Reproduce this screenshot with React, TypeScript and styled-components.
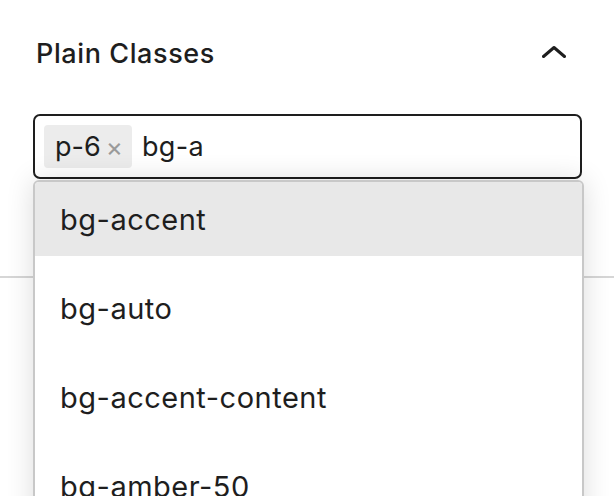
import React from "react";
import styled, { createGlobalStyle } from "styled-components";

const options = ["bg-accent", "bg-auto", "bg-accent-content", "bg-amber-50"];

function App() {
  return (
    <>
      <GlobalStyle />
      <Panel>
        <Header>
          <Title>Plain Classes</Title>
          <Chevron viewBox="0 0 24 12">
            <path d="M1.5 10.5 L12 1.5 L22.5 10.5" />
          </Chevron>
        </Header>
        <Field>
          <Input>
            <Tag>
              p-6
              <Remove>×</Remove>
            </Tag>
            <Query>bg-a</Query>
          </Input>
          <Dropdown>
            {options.map((option, i) => (
              <Option key={option} active={i === 0}>
                {option}
              </Option>
            ))}
          </Dropdown>
        </Field>
        <Divider />
      </Panel>
    </>
  );
}

const GlobalStyle = createGlobalStyle`
  html, body {
    margin: 0;
    padding: 0;
    background: #ffffff;
    overflow: hidden;
  }
  body {
    font-family: Inter, "Liberation Sans", sans-serif;
    color: #1e1e1e;
  }
`;

const Panel = styled.div`
  width: 614px;
  height: 496px;
  overflow: hidden;
`;

const Header = styled.div`
  height: 106px;
  display: flex;
  align-items: center;
  justify-content: space-between;
  padding: 0 48px 0 36px;
`;

const Title = styled.div`
  font-size: 27px;
  font-weight: 500;
  letter-spacing: 0.6px;
  color: #1e1e1e;
`;

const Chevron = styled.svg`
  width: 24px;
  height: 12px;
  margin-bottom: 2px;
  fill: none;
  stroke: #1e1e1e;
  stroke-width: 3;
  stroke-linecap: round;
  stroke-linejoin: round;
`;

const Field = styled.div`
  position: relative;
  padding: 8px 32px 97px 33px;
`;

const Input = styled.div`
  height: 65px;
  box-sizing: border-box;
  border: 2px solid #1e1e1e;
  border-radius: 7px;
  display: flex;
  align-items: center;
  gap: 10px;
  padding: 0 9px;
`;

const Tag = styled.div`
  height: 43px;
  display: flex;
  align-items: center;
  gap: 5px;
  padding: 0 9px 0 11px;
  background: #ececec;
  border-radius: 4px;
  font-size: 27px;
  color: #1e1e1e;
`;

const Remove = styled.span`
  color: #9a9a9a;
  font-size: 26px;
`;

const Query = styled.span`
  font-size: 27px;
  letter-spacing: 0.4px;
  color: #1e1e1e;
`;

const Dropdown = styled.div`
  position: absolute;
  top: 74px;
  left: 33px;
  width: 551px;
  box-sizing: border-box;
  border: 2px solid #c8c8c8;
  border-radius: 6px;
  background: #ffffff;
  box-shadow: 0 0 28px rgba(0, 0, 0, 0.14);
  overflow: hidden;
  z-index: 2;
`;

const Option = styled.div<{ active?: boolean }>`
  height: 74px;
  margin-bottom: 15px;
  display: flex;
  align-items: center;
  padding-left: 25px;
  font-size: 29px;
  letter-spacing: 0.5px;
  color: #1e1e1e;
  background: ${(props) => (props.active ? "#e8e8e8" : "transparent")};
`;

const Divider = styled.div`
  height: 2px;
  background: #d6d6d6;
`;

export default App;
